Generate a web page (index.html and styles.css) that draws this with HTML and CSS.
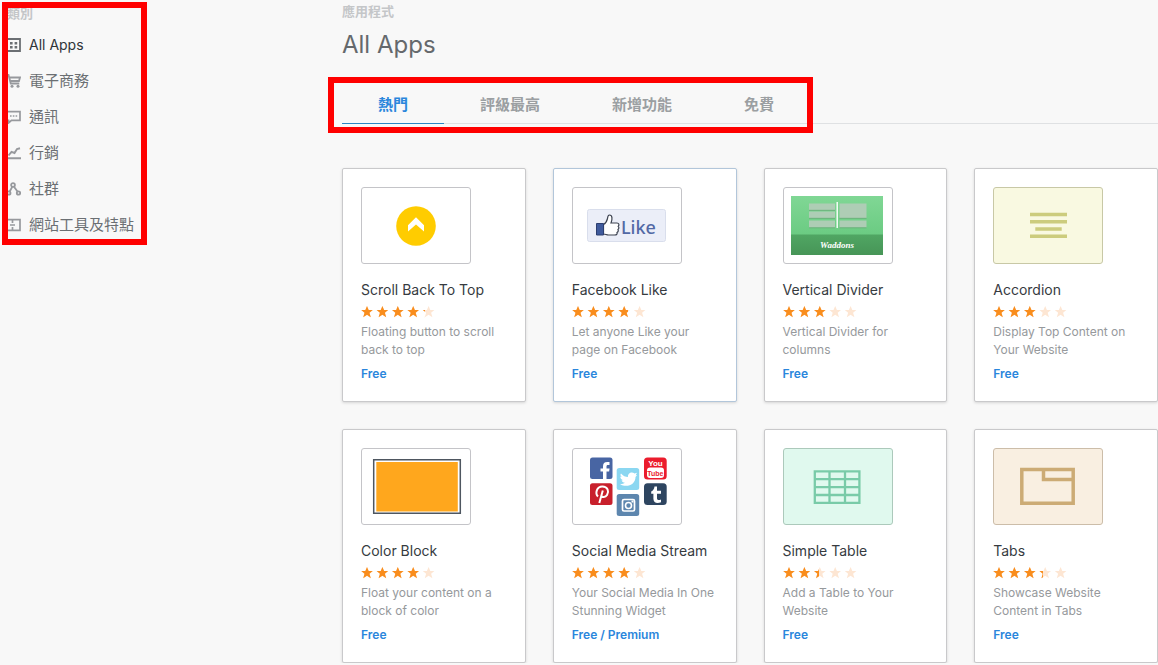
FILE: index.html
```html
<!DOCTYPE html>
<html lang="zh-Hant">
<head>
<meta charset="utf-8">
<title>All Apps</title>
<link rel="stylesheet" href="styles.css">
</head>
<body>
<svg class="defs" aria-hidden="true">
  <symbol id="star-row" viewBox="0 0 74 12">
    <path id="star" d="M6 0l1.700 4h4.100L8.500 6.800l1.300 4.500L6 8.700l-3.800 2.600 1.300-4.500L.2 4h4.100z"/>
    <use href="#star" x="15.400"/><use href="#star" x="30.800"/><use href="#star" x="46.200"/><use href="#star" x="61.600"/>
  </symbol>
</svg>
<div class="page">
  <aside class="sidebar">
    <h2 class="eyebrow">類別</h2>
    <nav class="categories">
      <a class="category category-current" href="#all"><svg class="category-icon" viewBox="0 0 14 14"><path d="M0 1h13v12H0z" fill="none" stroke="currentColor" stroke-width="1.800"/><path d="M3 4h2.600v2.400H3zM7.600 4h2.600v2.400H7.600zM3 8h2.600v2.400H3zM7.600 8h2.600v2.400H7.600z" fill="currentColor"/></svg>All Apps</a>
      <a class="category" href="#commerce"><svg class="category-icon" viewBox="0 0 14 14"><path d="M0 1h1.500l2.300 8.500h8.500M2.500 3.500h10.500L12 7H3.500" fill="none" stroke="currentColor" stroke-width="1.800"/><circle cx="5" cy="12.300" r="1.500" fill="currentColor"/><circle cx="11" cy="12.300" r="1.500" fill="currentColor"/></svg>電子商務</a>
      <a class="category" href="#communication"><svg class="category-icon" viewBox="0 0 14 14"><path d="M0 1.700h13v8.600H4.500L1.500 13v-2.700H0z" fill="none" stroke="currentColor" stroke-width="1.700"/><path d="M3 5.200h1.600v1.600H3zM5.800 5.200h1.600v1.600H5.800zM8.600 5.200h1.600v1.600H8.600z" fill="currentColor"/></svg>通訊</a>
      <a class="category" href="#marketing"><svg class="category-icon" viewBox="0 0 14 14"><path d="M0 12.300h14M1.500 9.500L4.500 5.800l3 1.200 2.500-4 3-.7" fill="none" stroke="currentColor" stroke-width="1.900"/></svg>行銷</a>
      <a class="category" href="#social"><svg class="category-icon" viewBox="0 0 14 14"><g fill="none" stroke="currentColor" stroke-width="1.800"><circle cx="6" cy="3" r="1.900"/><circle cx="1.800" cy="11" r="1.700"/><circle cx="11.500" cy="11" r="1.700"/><path d="M5.200 4.800L2.700 9.500M7 4.700l3.500 4.900"/></g></svg>社群</a>
      <a class="category" href="#tools"><svg class="category-icon" viewBox="0 0 14 14"><path d="M0 1.700h13v10.600H0zM5.500 1.700v3.300M5.500 9v3.300M3 7h5" fill="none" stroke="currentColor" stroke-width="1.700"/></svg>網站工具及特點</a>
    </nav>
  </aside>
  <main class="main">
    <p class="eyebrow">應用程式</p>
    <h1 class="title">All Apps</h1>
    <div class="tab-bar">
      <nav class="tabs">
        <button class="tab tab-current" type="button">熱門</button>
        <button class="tab" type="button">評級最高</button>
        <button class="tab" type="button">新增功能</button>
        <button class="tab" type="button">免費</button>
      </nav>
    </div>
    <div class="cards">
      <article class="card">
        <svg class="thumb" viewBox="0 0 108 75"><circle cx="54" cy="38" r="19.800" fill="#fc0"/><path d="M54 29.300l8 8v6.300l-8-7-8 7v-6.300z" fill="#fff"/></svg>
        <h3 class="name">Scroll Back To Top</h3>
        <div class="stars" role="img" aria-label="4.1 / 5"><svg class="star-row"><use href="#star-row"/></svg><div class="stars-on" style="width:86%"><svg class="star-row"><use href="#star-row"/></svg></div></div>
        <p class="desc">Floating button to scroll back to top</p>
        <a class="price" href="#scroll">Free</a>
      </article>
      <article class="card card-hover">
        <svg class="thumb" viewBox="0 0 108 75"><rect x="14.500" y="21.500" width="78" height="32" rx="2" fill="#ebeef8" stroke="#d9deec"/><path d="M30.500 36.500c3-1.500 3.500-4 4-6 .2-2 .5-3.500 2-3.500 3 0 3 4.500 1.500 8h6c2 0 2.500 2 1.200 3.300 1 1 .8 2.500-.2 3.200.7 1.300 0 2.500-1 3 .5 2-.5 2.500-2.500 2.500h-6c-2 0-3-1-5-1z" fill="#fff" stroke="#3c4250" stroke-width="1.200"/><path d="M23.500 35.500h7v11.500h-7z" fill="#3f5a9c" stroke="#2d3f70"/><text class="art-like" x="48" y="45.500">Like</text></svg>
        <h3 class="name">Facebook Like</h3>
        <div class="stars" role="img" aria-label="3.8 / 5"><svg class="star-row"><use href="#star-row"/></svg><div class="stars-on" style="width:76%"><svg class="star-row"><use href="#star-row"/></svg></div></div>
        <p class="desc">Let anyone Like your page on Facebook</p>
        <a class="price" href="#like">Free</a>
      </article>
      <article class="card">
        <svg class="thumb" viewBox="0 0 108 75"><defs><linearGradient id="sky" x2="0" y2="1"><stop stop-color="#80d795"/><stop offset="1" stop-color="#6bcb82"/></linearGradient><linearGradient id="ground" x2="0" y2="1"><stop stop-color="#50a663"/><stop offset="1" stop-color="#479557"/></linearGradient></defs><path d="M7 8h92v39H7z" fill="url(#sky)"/><path d="M7 46.500h92V67H7z" fill="url(#ground)"/><path d="M25 15.500h26V22H25zM25 23.500h26V30H25zM25 32.500h26v7H25zM55.500 15.500h27V30h-27zM55.500 32.500h27v7h-27z" fill="#aecdb5"/><path d="M25 22.300h26M25 30.300h26M25 39.800h26M55.500 30.300h27M55.500 39.800h27" stroke="#6aa878" stroke-width=".8"/><path d="M53.200 14v26" stroke="#fff" stroke-width="1.400"/><text class="art-script" x="53" y="59.500">Waddons</text></svg>
        <h3 class="name">Vertical Divider</h3>
        <div class="stars" role="img" aria-label="3 / 5"><svg class="star-row"><use href="#star-row"/></svg><div class="stars-on" style="width:60%"><svg class="star-row"><use href="#star-row"/></svg></div></div>
        <p class="desc">Vertical Divider for columns</p>
        <a class="price" href="#divider">Free</a>
      </article>
      <article class="card">
        <svg class="thumb thumb-olive" viewBox="0 0 108 75"><path d="M36 26.500h37M36 33.800h37M41.300 41h26.400M36 48.300h37" stroke="#cccc7d" stroke-width="3.600"/></svg>
        <h3 class="name">Accordion</h3>
        <div class="stars" role="img" aria-label="3 / 5"><svg class="star-row"><use href="#star-row"/></svg><div class="stars-on" style="width:60%"><svg class="star-row"><use href="#star-row"/></svg></div></div>
        <p class="desc">Display Top Content on Your Website</p>
        <a class="price" href="#accordion">Free</a>
      </article>
      <article class="card">
        <svg class="thumb" viewBox="0 0 108 75"><path d="M11.700 10.800h86.600v53.500H11.700z" fill="#fff" stroke="#4e5660" stroke-width="1.500"/><path d="M14.300 12.900h81.500v49.500H14.300z" fill="#ffa71d"/></svg>
        <h3 class="name">Color Block</h3>
        <div class="stars" role="img" aria-label="4 / 5"><svg class="star-row"><use href="#star-row"/></svg><div class="stars-on" style="width:81%"><svg class="star-row"><use href="#star-row"/></svg></div></div>
        <p class="desc">Float your content on a block of color</p>
        <a class="price" href="#block">Free</a>
      </article>
      <article class="card">
        <svg class="thumb" viewBox="0 0 108 75">
          <rect x="17" y="8.500" width="22.500" height="21.500" rx="2.500" fill="#4865a3"/><path d="M36.500 13h-2.200c-3 0-4.300 1.600-4.300 4.200v2.300h-2.500v3H30V30h3.500v-7.500h2.600l.5-3h-3.100v-2c0-1 .4-1.500 1.600-1.500h1.400z" fill="#fff"/>
          <rect x="17" y="34.300" width="22.500" height="21.700" rx="2.500" fill="#c8202c"/><path d="M25 47.500c-3.200-3-1.300-10 4.300-10 5.500 0 7 5 4.700 8.600-1.500 2.500-5 2.600-6 .7M29.800 41.500L26.300 54" fill="none" stroke="#fff" stroke-width="2"/>
          <rect x="43.700" y="19" width="22.500" height="22" rx="2.500" fill="#8bd7f1"/><path d="M48 24.500c2 2.500 4.500 3.500 7 3.600-.6-4 4-6 6.500-3.500l2.500-.8-1.300 2.400 1.500-.2-1.700 1.900c.2 7-8 11.500-15.500 7.300 2 .1 3.700-.4 5-1.400-2 0-3-1.200-3.400-2.500h1.500c-2-.8-2.800-2-2.800-3.700l1.500.4c-1.500-1.200-1.700-2.500-.8-3.500z" fill="#fff"/>
          <rect x="43.700" y="45" width="22.500" height="22" rx="2.500" fill="#5d86ae"/><rect x="49.500" y="50.500" width="12" height="11.500" rx="1.500" fill="none" stroke="#fff" stroke-width="1.700"/><circle cx="55.500" cy="56.500" r="3" fill="none" stroke="#fff" stroke-width="1.600"/><path d="M58.500 51.500h2v2h-2z" fill="#fff"/>
          <rect x="71" y="8.500" width="22.700" height="22" rx="3.500" fill="#eb1c2d"/><rect x="74" y="18.500" width="17" height="10.500" rx="3" fill="#fff"/><text class="art-tube" x="82.400" y="17">You</text><text class="art-tube art-tube-red" x="82.400" y="27">Tube</text>
          <rect x="71" y="34.300" width="22.700" height="21.700" rx="3.500" fill="#2e4560"/><path d="M81.500 37.500H84v4.200h4v3h-4v4.600c0 2 1.800 2.200 4 1.200v2.800c-4 1.800-7.600.5-7.600-3.500v-5.100h-2.200v-2.300c2-.7 3-2.400 3.300-4.900z" fill="#fff"/>
        </svg>
        <h3 class="name">Social Media Stream</h3>
        <div class="stars" role="img" aria-label="4 / 5"><svg class="star-row"><use href="#star-row"/></svg><div class="stars-on" style="width:81%"><svg class="star-row"><use href="#star-row"/></svg></div></div>
        <p class="desc">Your Social Media In One Stunning Widget</p>
        <a class="price" href="#stream">Free / Premium</a>
      </article>
      <article class="card">
        <svg class="thumb thumb-mint" viewBox="0 0 108 75"><path d="M30.800 22.400h44.600v31.400H30.800zM45.500 22v32M61 22v32M30 30.200h46M30 38.200h46M30 46h46" fill="none" stroke="#79cba8" stroke-width="2.300"/></svg>
        <h3 class="name">Simple Table</h3>
        <div class="stars" role="img" aria-label="2.4 / 5"><svg class="star-row"><use href="#star-row"/></svg><div class="stars-on" style="width:49%"><svg class="star-row"><use href="#star-row"/></svg></div></div>
        <p class="desc">Add a Table to Your Website</p>
        <a class="price" href="#table">Free</a>
      </article>
      <article class="card">
        <svg class="thumb thumb-sand" viewBox="0 0 108 75"><path d="M27.800 20.500h51.400v33.700H27.800zM49.500 20v10.400H79" fill="none" stroke="#ccab75" stroke-width="3.500"/></svg>
        <h3 class="name">Tabs</h3>
        <div class="stars" role="img" aria-label="3.3 / 5"><svg class="star-row"><use href="#star-row"/></svg><div class="stars-on" style="width:67%"><svg class="star-row"><use href="#star-row"/></svg></div></div>
        <p class="desc">Showcase Website Content in Tabs</p>
        <a class="price" href="#tabs">Free</a>
      </article>
    </div>
  </main>
</div>
</body>
</html>
```
FILE: styles.css
```css
* { box-sizing: border-box; }

body {
  margin: 0;
  background: #f8f8f8;
  color: #363b3f;
  font-family: Inter, "Noto Sans CJK TC", sans-serif;
}

h1, h2, h3, p { margin: 0; }
a { text-decoration: none; }

.defs { position: absolute; width: 0; height: 0; }

.page { display: flex; align-items: flex-start; }

.sidebar {
  position: relative;
  flex: none;
  width: 148px;
  margin-right: 194px;
  padding: 3px 0 2px 7px;
}

/* Red highlight frames drawn over the navigation areas */
.sidebar::after,
.tabs::after {
  content: "";
  position: absolute;
  border: 6px solid #f00;
  pointer-events: none;
}
.sidebar::after { inset: 2px 1px 0 2px; }
.tabs::after { inset: -10px -3px -9px -14px; }

.eyebrow {
  font-size: 13px;
  line-height: 20px;
  font-weight: 700;
  color: #c4c6c8;
}

.categories { display: flex; flex-direction: column; padding-top: 4px; }

.category {
  display: flex;
  align-items: center;
  gap: 8px;
  height: 36px;
  font-size: 15px;
  line-height: 20px;
  color: #6b6f73;
  white-space: nowrap;
}
.category-current { color: #2f3438; font-size: 14px; }
.category-icon { flex: none; width: 14px; height: 14px; color: #97999d; }
.category-current .category-icon { color: #6b6f73; }

.main { flex: 1; min-width: 0; padding-top: 1px; }

.title {
  padding: 8px 0 26px;
  font-size: 24px;
  line-height: 32px;
  font-weight: 400;
  color: #65696c;
}

.tab-bar { border-bottom: 1px solid #dfe1e3; }

.tabs {
  position: relative;
  display: flex;
  width: max-content;
  margin-bottom: -1px;
}

.tab {
  padding: 8px 36px;
  border: 0;
  border-bottom: 1px solid transparent;
  background: none;
  font: 700 15px/20px Inter, "Noto Sans CJK TC", sans-serif;
  color: #9b9fa2;
}
.tab-current { border-bottom-color: #2a86c4; color: #2a86dc; }

.cards {
  display: grid;
  grid-template-columns: repeat(4, 1fr);
  gap: 27px;
  padding-top: 44px;
}

.card {
  display: flex;
  flex-direction: column;
  align-items: flex-start;
  padding: 18px;
  border: 1px solid #c9c9cb;
  border-radius: 2px;
  background: #fff;
  box-shadow: 0 1px 3px rgba(0, 0, 0, .14);
}
.card-hover { border-color: #b2c6da; }

.thumb {
  width: 110px;
  height: 77px;
  border: 1px solid #c4c4c8;
  border-radius: 3px;
  background: #fff;
}
.thumb-olive { background: #f9f9e1; border-color: #c8c8a6; }
.thumb-mint { background: #e0f9ee; border-color: #acc9bb; }
.thumb-sand { background: #f9efe1; border-color: #ccbda9; }

.art-like { font: 500 18px "Noto Sans", sans-serif; fill: #5269a5; }
.art-script { font: italic 700 9px "Liberation Serif", serif; fill: #fff; text-anchor: middle; }
.art-tube { font: 700 8px "Liberation Sans", sans-serif; fill: #fff; text-anchor: middle; }
.art-tube-red { font-size: 7px; fill: #eb1c2d; }

.name {
  margin-top: 16px;
  font-size: 14px;
  line-height: 20px;
  font-weight: 400;
  white-space: nowrap;
}

.stars { position: relative; width: 74px; height: 12px; margin: 6px 0 5px; }
.star-row { display: block; width: 74px; height: 12px; fill: #fde6d3; }
.stars-on { position: absolute; top: 0; left: 0; overflow: hidden; }
.stars-on .star-row { fill: #f98d1d; }

.desc { font-size: 12px; line-height: 18px; color: #96999c; }

.price {
  margin-top: 6px;
  font-size: 12px;
  line-height: 18px;
  font-weight: 600;
  color: #2a86dc;
}
```
